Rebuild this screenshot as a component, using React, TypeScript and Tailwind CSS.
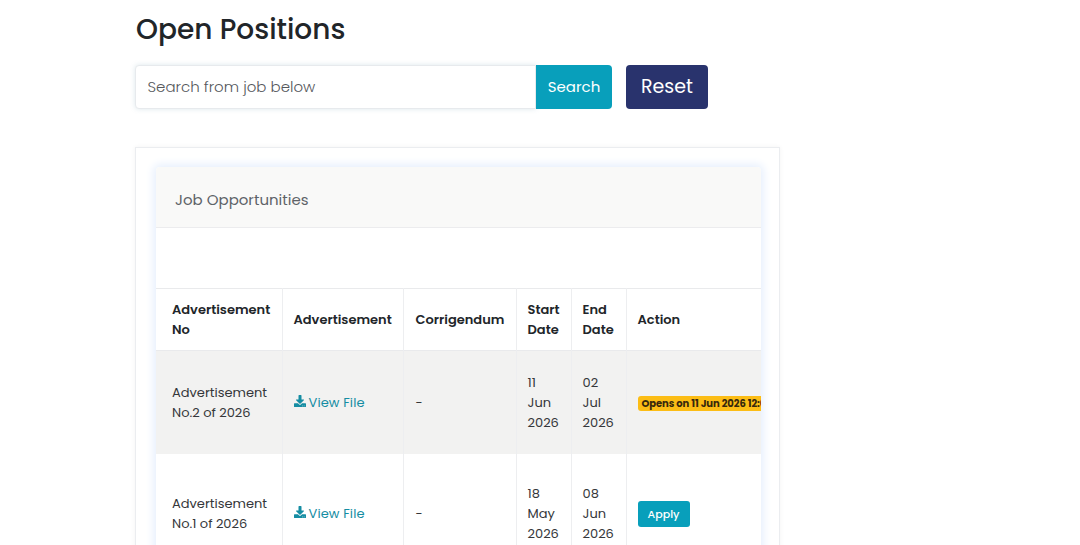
import { FaDownload } from "react-icons/fa";

const jobs = [
  {
    no: ["Advertisement", "No.2 of 2026"],
    start: ["11", "Jun", "2026"],
    end: ["02", "Jul", "2026"],
    opens: "Opens on 11 Jun 2026 12:00 AM",
  },
  {
    no: ["Advertisement", "No.1 of 2026"],
    start: ["18", "May", "2026"],
    end: ["08", "Jun", "2026"],
  },
];

const Lines = ({ items }: { items: string[] }) => (
  <>
    {items.map((item) => (
      <span key={item} className="block whitespace-nowrap">
        {item}
      </span>
    ))}
  </>
);

const SearchBar = () => (
  <form className="mt-[15px] flex h-11 w-[573px]" onSubmit={(e) => e.preventDefault()}>
    <input
      type="text"
      placeholder="Search from job below"
      className="w-[401px] rounded-l border border-[#e7eaed] bg-white px-[11.5px] text-[15px] font-light shadow-[0_0_5px_rgba(120,160,180,0.25)] outline-none placeholder:text-[#55585c]"
    />
    <button className="w-[76px] rounded-r bg-[#089fbb] text-[15px] text-white">Search</button>
    <button type="reset" className="ml-3.5 w-[82px] rounded bg-[#29336d] text-[19px] text-white">
      Reset
    </button>
  </form>
);

const JobTable = () => (
  <table className="w-[680px] table-fixed border-collapse text-[13px] leading-5 text-[#35373a]">
    <colgroup>
      <col className="w-[126px]" />
      <col className="w-[121px]" />
      <col className="w-[113px]" />
      <col className="w-[55px]" />
      <col className="w-[55px]" />
      <col />
    </colgroup>
    <thead>
      <tr className="h-[62px] border-y border-[#e9eaec] text-left text-[#212529] *:border-r *:border-[#edeef0] *:px-[11px] *:font-semibold">
        <th className="pl-4!">
          <Lines items={["Advertisement", "No"]} />
        </th>
        <th>Advertisement</th>
        <th className="pl-3!">Corrigendum</th>
        <th>
          <Lines items={["Start", "Date"]} />
        </th>
        <th>
          <Lines items={["End", "Date"]} />
        </th>
        <th>Action</th>
      </tr>
    </thead>
    <tbody>
      {jobs.map((job) => (
        <tr
          key={job.no[1]}
          className="h-[119px] *:border-r *:border-[#edeef0] *:px-[11px] *:pt-px odd:h-[103px] odd:bg-[#f2f2f1]"
        >
          <td className="pl-4!">
            <Lines items={job.no} />
          </td>
          <td>
            <a href="#" className="flex items-center gap-[3px] tracking-[0.1px] whitespace-nowrap text-[#158da3]">
              <FaDownload className="mb-1 size-3" />
              View File
            </a>
          </td>
          <td className="pl-3!">-</td>
          <td>
            <Lines items={job.start} />
          </td>
          <td>
            <Lines items={job.end} />
          </td>
          <td>
            {job.opens ? (
              <span className="mt-0.5 inline-block rounded-[3px] bg-[#fcbd15] px-1 text-[10px] leading-[15px] font-bold tracking-[-0.08px] whitespace-nowrap text-[#38290c]">
                {job.opens}
              </span>
            ) : (
              <button className="block h-[26px] w-[52px] rounded-[3px] bg-[#089fbb] text-[11px] font-medium text-white">
                Apply
              </button>
            )}
          </td>
        </tr>
      ))}
    </tbody>
  </table>
);

const App = () => {
  return (
    <main className="h-[545px] overflow-hidden bg-white pt-2.5 pl-[135px] font-['Poppins','Inter',sans-serif]">
      <h1 className="pl-px text-[28px] leading-10 font-medium text-[#212529]">Open Positions</h1>
      <SearchBar />

      <section className="mt-[38px] h-[450px] w-[645px] border border-[#ebedf0] pt-[19px] pl-5 shadow-[0_0_5px_rgba(0,0,0,0.05)]">
        <div className="h-[430px] w-[605px] rounded-t shadow-[0_0_8px_3px_#e8f0fd]">
          <div className="flex h-[61px] items-center rounded-t border-b border-[#ececee] bg-[#f9f9f8] pt-1.5 pl-[19px] text-[15px] text-[#5e6368]">
            Job Opportunities
          </div>
          <div className="overflow-hidden bg-white pt-[60px]">
            <JobTable />
          </div>
        </div>
      </section>
    </main>
  );
};

export default App;
